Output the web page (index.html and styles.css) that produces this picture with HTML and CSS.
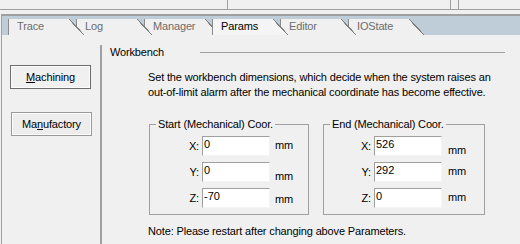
FILE: index.html
```html
<!DOCTYPE html>
<html lang="en">
  <head>
    <meta charset="UTF-8" />
    <title>Params</title>
    <link rel="stylesheet" href="styles.css">
  </head>
  <body>
    <div class="topbar">
      <div class="top-cell c1"></div>
      <div class="top-cell c2"></div>
      <div class="top-cell c3"></div>
    </div>

    <div class="window">
      <div class="tabs">
        <div class="tab t1">Trace</div>
        <div class="tab t2">Log</div>
        <div class="tab t3">Manager</div>
        <div class="tab active">Params</div>
        <div class="tab t5">Editor</div>
        <div class="tab t6">IOState</div>
      </div>

      <div class="page">
        <div class="side">
          <button class="side-btn machining"><u>M</u>achining</button>
          <button class="side-btn manufactory">Ma<u>n</u>ufactory</button>
        </div>

        <div class="main">
          <div class="section-head">
            <span class="section-title">Workbench</span>
            <span class="section-line"></span>
          </div>
          <p class="desc">
            Set the workbench dimensions, which decide when the system raises an<br />
            out-of-limit alarm after the mechanical coordinate has become effective.
          </p>

          <div class="groups">
            <fieldset class="coord start">
              <legend>Start (Mechanical) Coor.</legend>
              <div class="row">
                <label>X:</label><input type="text" value="0" /><span class="mm up3">mm</span>
              </div>
              <div class="row">
                <label>Y:</label><input type="text" value="0" /><span class="mm up8">mm</span>
              </div>
              <div class="row">
                <label>Z:</label><input type="text" value="-70" /><span class="mm up5">mm</span>
              </div>
            </fieldset>

            <fieldset class="coord end">
              <legend>End (Mechanical) Coor.</legend>
              <div class="row">
                <label>X:</label><input type="text" value="526" /><span class="mm up8">mm</span>
              </div>
              <div class="row">
                <label>Y:</label><input type="text" value="292" /><span class="mm up3">mm</span>
              </div>
              <div class="row">
                <label>Z:</label><input type="text" value="0" /><span class="mm up3">mm</span>
              </div>
            </fieldset>
          </div>

          <p class="note">Note: Please restart after changing above Parameters.</p>
        </div>
      </div>
    </div>
  </body>
</html>
```

FILE: styles.css
```css
* {
  box-sizing: border-box;
}
body {
  margin: 0;
  width: 520px;
  height: 244px;
  overflow: hidden;
  background-color: #f0f0f0;
  font-family: "Liberation Sans", Arial, sans-serif;
  font-size: 11px;
  line-height: 13px;
  letter-spacing: -0.15px;
  color: #000;
}

/* strip left over from the window above */
.topbar {
  display: flex;
  height: 10px;
  border-bottom: 1px solid #a0a0a0;
}
.top-cell {
  border-right: 1px solid #a0a0a0;
}
.c1 {
  width: 228px;
}
.c2 {
  width: 223px;
}
.c3 {
  width: 8px;
}

.window {
  margin-top: 4px;
  margin-left: 1px;
  height: 230px;
  border-top: 2px solid #a0a0a0;
  border-left: 1px solid #a0a0a0;
}

/* tab strip */
.tabs {
  display: flex;
  height: 19px;
  padding: 3px 0 0 6px;
  background-color: #bfcdd9;
}
.tab {
  width: 76px;
  height: 16px;
  margin-right: -8px;
  padding-left: 8px;
  border-left: 1px solid #8a8a8a;
  color: #6d6d6d;
  line-height: 15px;
  background:
    linear-gradient(to top right, #f0f0f0 calc(50% - 0.6px), #7e7e7e calc(50% - 0.5px), #7e7e7e calc(50% + 0.5px), transparent calc(50% + 0.6px)) right top / 15px 16px no-repeat,
    linear-gradient(#f0f0f0, #f0f0f0) left top / calc(100% - 15px) 100% no-repeat;
}
.t1 { z-index: 6; }
.t2 { z-index: 5; }
.t3 { z-index: 4; }
.t5 { z-index: 2; }
.t6 { z-index: 1; }
.tab.active {
  z-index: 9;
  color: #000;
  background:
    linear-gradient(to top right, #f5f5f5 calc(50% - 0.6px), #7e7e7e calc(50% - 0.5px), #7e7e7e calc(50% + 0.5px), transparent calc(50% + 0.6px)) right top / 15px 16px no-repeat,
    linear-gradient(#f5f5f5, #f5f5f5) left top / calc(100% - 15px) 100% no-repeat;
}

.page {
  display: flex;
  height: 209px;
}

/* left button column */
.side {
  display: flex;
  flex-direction: column;
  align-items: flex-start;
  width: 100px;
  margin-top: 10px;
  border-right: 2px solid #a0a0a0;
}
.side-btn {
  width: 81px;
  height: 24px;
  padding: 0;
  font-family: inherit;
  font-size: 11px;
  letter-spacing: -0.15px;
  color: #000;
  background-color: #f0f0f0;
  border: 1px solid #6d6d6d;
  box-shadow: inset 0 0 0 1px #fcfcfc;
}
.machining {
  margin: 20px 0 0 8px;
}
.manufactory {
  margin: 23px 0 0 9px;
  border-color: #9a9a9a;
  background-color: #ededed;
}

/* right side */
.main {
  flex: 1;
  padding-left: 8px;
}
.section-head {
  display: flex;
  margin-top: 11px;
}
.section-title {
  width: 90px;
}
.section-line {
  flex: 1;
  height: 0;
  margin: 6px 15px 0 0;
  border-top: 1px solid #a0a0a0;
}
.desc {
  margin: 11px 0 0 38px;
  line-height: 15px;
}

.groups {
  display: flex;
  gap: 14px;
  margin: 18px 0 0 39px;
}
.coord {
  margin: 0;
  padding: 5px 0 0 0;
  height: 97px;
  border: 1px solid #a0a0a0;
}
.coord legend {
  margin-left: 6px;
  padding: 0 2px;
}
.start {
  width: 160px;
}
.end {
  width: 162px;
}
.row {
  display: flex;
  align-items: center;
  height: 20px;
  margin-bottom: 6px;
}
.row label {
  text-align: right;
}
.start label {
  width: 49px;
}
.end label {
  width: 47px;
}
.row input {
  width: 68px;
  height: 20px;
  margin: 0 0 0 3px;
  padding: 1px 1px 5px 1px;
  font-family: inherit;
  font-size: 11px;
  line-height: 12px;
  color: #000;
  background-color: #fff;
  border: 1px solid;
  border-color: #a0a0a0 #f4f4f4 #f4f4f4 #a0a0a0;
  outline: none;
}
.mm {
  align-self: flex-start;
  margin-left: 5px;
}
.end .mm {
  margin-left: 6px;
}
.up3 { margin-top: 3px; }
.up5 { margin-top: 5px; }
.up8 { margin-top: 8px; }

.note {
  margin: 10px 0 0 38px;
}
```
